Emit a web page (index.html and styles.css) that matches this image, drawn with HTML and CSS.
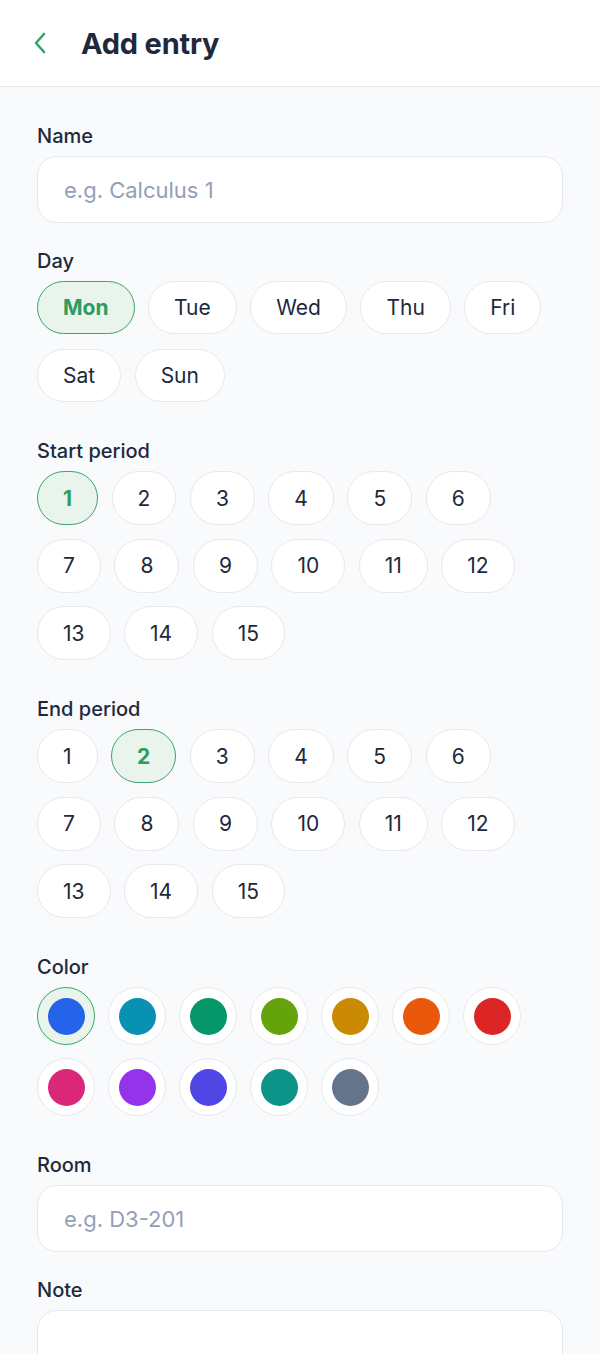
FILE: index.html
```html
<!DOCTYPE html>
<html>
<head lang="en">
    <meta charset="UTF-8">
    <title>Add entry</title>
    <link rel="stylesheet" href="styles.css">
</head>
<body>
<div id="header">
    <span class="back">
        <svg width="14" height="22" viewBox="0 0 14 22">
            <polyline points="11,2 3,11 11,20" fill="none" stroke="#35a46a" stroke-width="2.6" stroke-linecap="round" stroke-linejoin="round"/>
        </svg>
    </span>
    <h1>Add entry</h1>
</div>
<div id="form">
    <div class="field">
        <label>Name</label>
        <input class="text" type="text" placeholder="e.g. Calculus 1">
    </div>

    <div class="field">
        <label>Day</label>
        <div class="chips days">
            <button class="chip selected">Mon</button>
            <button class="chip">Tue</button>
            <button class="chip">Wed</button>
            <button class="chip">Thu</button>
            <button class="chip">Fri</button>
            <button class="chip">Sat</button>
            <button class="chip">Sun</button>
        </div>
    </div>

    <div class="field">
        <label>Start period</label>
        <div class="chips periods" id="start"></div>
    </div>

    <div class="field">
        <label>End period</label>
        <div class="chips periods" id="end"></div>
    </div>

    <div class="field">
        <label>Color</label>
        <div class="chips colors" id="colors"></div>
    </div>

    <div class="field">
        <label>Room</label>
        <input class="text" type="text" placeholder="e.g. D3-201">
    </div>

    <div class="field">
        <label>Note</label>
        <textarea class="text note"></textarea>
    </div>
</div>
<script>
    // period pickers 1..15
    function fillPeriods(id, picked) {
        var box = document.getElementById(id);
        for (var i = 1; i <= 15; i++) {
            var b = document.createElement("button");
            b.className = i == picked ? "chip selected" : "chip";
            b.innerHTML = i;
            box.appendChild(b);
        }
    }
    fillPeriods("start", 1);
    fillPeriods("end", 2);

    var colors = ["#2563eb", "#0891b2", "#059669", "#65a30d", "#ca8a04", "#ea580c", "#dc2626",
        "#db2777", "#9333ea", "#4f46e5", "#0d9488", "#64748b"];
    var oColors = document.getElementById("colors");
    for (var j = 0; j < colors.length; j++) {
        var s = document.createElement("button");
        s.className = j == 0 ? "swatch selected" : "swatch";
        var dot = document.createElement("span");
        dot.style.background = colors[j];
        s.appendChild(dot);
        oColors.appendChild(s);
    }
</script>
</body>
</html>
```

FILE: styles.css
```css
* {
    margin: 0;
    padding: 0;
    box-sizing: border-box;
}

body {
    background: #f8fafc;
    font-family: Inter, "Noto Sans", sans-serif;
    color: #1e293b;
}

#header {
    height: 87px;
    background: #fff;
    border-bottom: 1px solid #e3e9e6;
    display: flex;
    align-items: center;
    padding-left: 33px;
}

#header .back {
    display: flex;
    width: 48px;
}

#header h1 {
    font-size: 29px;
    font-weight: 700;
    letter-spacing: -0.2px;
    color: #1e293b;
}

#form {
    padding: 37px 37px 0 37px;
}

.field {
    margin-bottom: 26px;
}

.field label {
    display: block;
    font-size: 20px;
    line-height: 24px;
    font-weight: 500;
    margin-bottom: 8px;
}

.text {
    display: block;
    width: 100%;
    height: 67px;
    border: 1px solid #e4e8ee;
    border-radius: 20px;
    background: #fff;
    padding: 0 26px;
    font-family: inherit;
    font-size: 22px;
    color: #1e293b;
    outline: none;
}

.text::placeholder {
    color: #94a0b6;
}

.note {
    height: 130px;
    resize: none;
}

.chips {
    display: flex;
    flex-wrap: wrap;
    gap: 13.5px 13.5px;
    padding-bottom: 11px;
}

.chip {
    height: 54px;
    padding: 0 25px;
    border: 1px solid #e6e9ed;
    border-radius: 27px;
    background: #fff;
    font-family: inherit;
    font-size: 21px;
    color: #1e293b;
    cursor: pointer;
}

.days .chip {
    height: 53px;
    padding: 0 25px;
}

.days {
    row-gap: 15px;
}

.chip.selected {
    background: #e8f4ec;
    border-color: #3ba56a;
    color: #2f9b5f;
    font-weight: 700;
}

.swatch {
    width: 58px;
    height: 58px;
    border: 1px solid #e6e9ed;
    border-radius: 50%;
    background: #fff;
    display: flex;
    align-items: center;
    justify-content: center;
    cursor: pointer;
}

.swatch span {
    display: block;
    width: 37px;
    height: 37px;
    border-radius: 50%;
}

.swatch.selected {
    background: #e8f4ec;
    border: 1.5px solid #3ba56a;
}

.colors {
    gap: 13px 13px;
}
```
